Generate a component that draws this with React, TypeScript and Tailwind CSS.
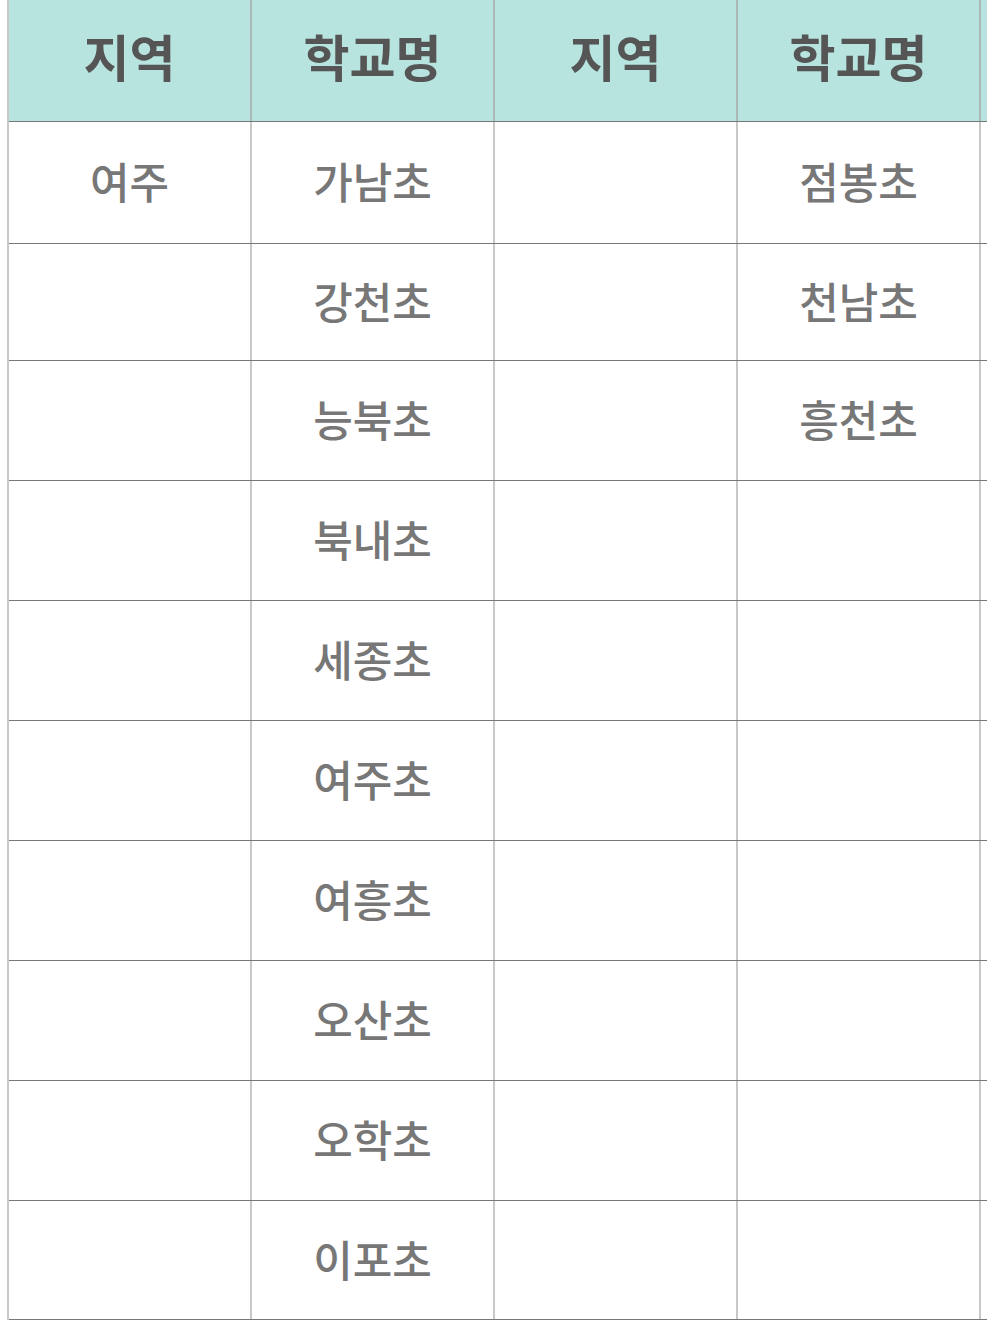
import React from "react";

const rows: { region: string; school: string; region2: string; school2: string; h: string }[] = [
  { region: "여주", school: "가남초", region2: "", school2: "점봉초", h: "h-[122px]" },
  { region: "", school: "강천초", region2: "", school2: "천남초", h: "h-[117px]" },
  { region: "", school: "능북초", region2: "", school2: "흥천초", h: "h-[120px]" },
  { region: "", school: "북내초", region2: "", school2: "", h: "h-[120px]" },
  { region: "", school: "세종초", region2: "", school2: "", h: "h-[120px]" },
  { region: "", school: "여주초", region2: "", school2: "", h: "h-[120px]" },
  { region: "", school: "여흥초", region2: "", school2: "", h: "h-[120px]" },
  { region: "", school: "오산초", region2: "", school2: "", h: "h-[120px]" },
  { region: "", school: "오학초", region2: "", school2: "", h: "h-[120px]" },
  { region: "", school: "이포초", region2: "", school2: "", h: "h-[119px]" },
];

const headers = ["지역", "학교명", "지역", "학교명", ""];

export default function App() {
  return (
    <div
      className="w-[987px] h-[1320px] overflow-hidden bg-white pl-[7px]"
      style={{ fontFamily: '"Noto Sans CJK KR", "Noto Sans", sans-serif' }}
    >
      <div className="w-[1300px] border-l-2 border-[#c8c8c8]">
        {/* header */}
        <div className="flex h-[122px] bg-[#b7e4df] border-b border-[#777]">
          {headers.map((h, i) => (
            <div
              key={i}
              className="w-[243px] shrink-0 flex items-center justify-center border-r-2 border-[#aab8b6] text-[50px] font-bold text-[#555] pb-[10px]"
            >
              {h}
            </div>
          ))}
        </div>

        {/* body */}
        {rows.map((r, i) => (
          <div key={i} className={`flex border-b border-[#777] ${r.h}`}>
            {[r.region, r.school, r.region2, r.school2, ""].map((c, j) => (
              <div
                key={j}
                className="w-[243px] shrink-0 flex items-center justify-center border-r-2 border-[#c8c8c8] text-[43px] font-medium text-[#777] pb-[4px]"
              >
                {c}
              </div>
            ))}
          </div>
        ))}
      </div>
    </div>
  );
}
